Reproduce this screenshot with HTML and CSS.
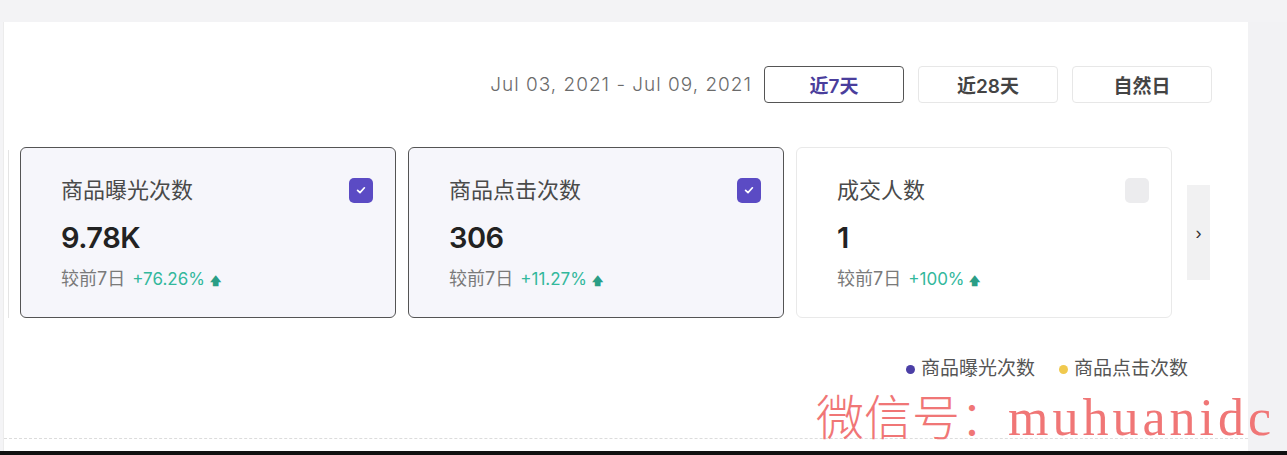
FILE: index.html
```html
<!DOCTYPE html>
<html lang="zh-CN">
<head>
    <meta charset="UTF-8">
    <meta name="viewport" content="width=device-width, initial-scale=1.0">
    <title>数据概览</title>
    <link rel="stylesheet" href="styles.css">
</head>
<body>
    <div class="top-strip"></div>
    <div class="main">
        <div class="panel">
            <div class="toolbar">
                <span class="date-range">Jul 03, 2021 - Jul 09, 2021</span>
                <button class="range-btn active">近7天</button>
                <button class="range-btn">近28天</button>
                <button class="range-btn">自然日</button>
            </div>

            <div class="cards-row">
                <div class="card-edge"></div>
                <div class="card selected">
                    <div class="card-head">
                        <span class="card-title">商品曝光次数</span>
                        <span class="check on">
                            <svg viewBox="0 0 12 12" width="12" height="12"><path d="M2.6 6.3 L5 8.6 L9.4 3.8" fill="none" stroke="#fff" stroke-width="1.7" stroke-linecap="round" stroke-linejoin="round"/></svg>
                        </span>
                    </div>
                    <div class="card-value">9.78K</div>
                    <div class="card-compare">较前7日 <span class="up">+76.26% <i class="arrow">&#129093;</i></span></div>
                </div>
                <div class="card selected">
                    <div class="card-head">
                        <span class="card-title">商品点击次数</span>
                        <span class="check on">
                            <svg viewBox="0 0 12 12" width="12" height="12"><path d="M2.6 6.3 L5 8.6 L9.4 3.8" fill="none" stroke="#fff" stroke-width="1.7" stroke-linecap="round" stroke-linejoin="round"/></svg>
                        </span>
                    </div>
                    <div class="card-value">306</div>
                    <div class="card-compare">较前7日 <span class="up">+11.27% <i class="arrow">&#129093;</i></span></div>
                </div>
                <div class="card">
                    <div class="card-head">
                        <span class="card-title">成交人数</span>
                        <span class="check"></span>
                    </div>
                    <div class="card-value">1</div>
                    <div class="card-compare">较前7日 <span class="up">+100% <i class="arrow">&#129093;</i></span></div>
                </div>
                <button class="next-btn">&#8250;</button>
            </div>

            <div class="legend">
                <span class="legend-item"><i class="dot purple"></i>商品曝光次数</span>
                <span class="legend-item"><i class="dot yellow"></i>商品点击次数</span>
            </div>

            <div class="dashed"></div>
            <div class="watermark">微信号：<span class="wm-latin">muhuanidc</span></div>
        </div>
        <div class="side"></div>
    </div>
    <div class="bottom-bar"></div>
</body>
</html>
```

FILE: styles.css
```css
/* Page frame */
html, body {
    margin: 0;
    width: 1287px;
    height: 455px;
    overflow: hidden;
    background-color: #f4f4f6;
    font-family: "Inter", "Noto Sans CJK SC", sans-serif;
}
.top-strip {
    height: 22px;
    background-color: #f3f3f5;
}
.main {
    display: flex;
    height: 429px;
}
.panel {
    position: relative;
    width: 1245px;
    margin-left: 3px;
    background-color: #ffffff;
    border-left: 1px solid #ececec;
    box-sizing: border-box;
}
.side {
    flex: 1;
    background-color: #f2f2f4;
}
.bottom-bar {
    height: 4px;
    background-color: #111111;
}

/* Date range toolbar */
.toolbar {
    display: flex;
    justify-content: flex-end;
    align-items: center;
    padding: 44px 36px 0 0;
    height: 37px;
}
.date-range {
    color: #6b6b6b;
    font-size: 19px;
    font-weight: 300;
    letter-spacing: 1px;
    margin-right: 12px;
}
.range-btn {
    width: 140px;
    height: 37px;
    margin-left: 14px;
    border: 1px solid #e7e7e7;
    border-radius: 4px;
    background-color: #ffffff;
    color: #444444;
    font-family: inherit;
    font-size: 19px;
    font-weight: 600;
}
.range-btn.active {
    border: 1.5px solid #555555;
    color: #4a3e9c;
    margin-left: 0;
}

/* Metric cards */
.cards-row {
    display: flex;
    align-items: flex-start;
    margin-top: 44px;
    padding-left: 4px;
}
.card-edge {
    width: 1px;
    height: 168px;
    margin-top: 3px;
    margin-right: 11px;
    background-color: #e4e4e4;
}
.card {
    width: 376px;
    height: 171px;
    margin-right: 12px;
    padding: 27px 22px 0 40px;
    box-sizing: border-box;
    border: 1px solid #e9e9e9;
    border-radius: 6px;
    background-color: #ffffff;
}
.card.selected {
    border: 1.5px solid #545454;
    background-color: #f6f6fb;
}
.card-head {
    display: flex;
    justify-content: space-between;
    align-items: center;
    height: 30px;
}
.card-title {
    color: #4a4a4a;
    font-size: 22px;
    line-height: 30px;
}
.check {
    display: flex;
    align-items: center;
    justify-content: center;
    width: 24px;
    height: 25px;
    border-radius: 5px;
    background-color: #ececee;
}
.check.on {
    background-color: #5b4bc4;
}
.card-value {
    margin-top: 15px;
    color: #222222;
    font-size: 29px;
    font-weight: 600;
    letter-spacing: -0.5px;
}
.card-compare {
    margin-top: 9px;
    color: #7a7a7a;
    font-size: 18px;
}
.up {
    color: #33b89c;
    font-size: 17px;
    margin-left: 2px;
}
.arrow {
    font-style: normal;
    font-weight: 700;
    font-size: 11px;
    color: #2a9e86;
}
.next-btn {
    width: 23px;
    height: 95px;
    margin: 38px 0 0 3px;
    padding: 0;
    border: none;
    background-color: #f1f1f2;
    color: #333333;
    font-size: 18px;
    line-height: 1;
}

/* Chart legend */
.legend {
    display: flex;
    justify-content: flex-end;
    gap: 24px;
    padding-right: 60px;
    margin-top: 40px;
}
.legend-item {
    display: flex;
    align-items: center;
    color: #555555;
    font-size: 19px;
    line-height: 22px;
}
.dot {
    display: inline-block;
    width: 9px;
    height: 9px;
    border-radius: 50%;
    margin-right: 6px;
}
.dot.purple {
    background-color: #4b3fa6;
}
.dot.yellow {
    background-color: #f0c94e;
}
.dashed {
    position: absolute;
    left: 0;
    right: 0;
    top: 416px;
    border-top: 1px dashed #dcdcdc;
}

/* Overlay watermark */
.watermark {
    position: absolute;
    left: 812px;
    top: 366px;
    line-height: 52px;
    color: #f07676;
    font-family: "Noto Sans CJK SC", sans-serif;
    font-size: 48px;
    font-weight: 300;
    white-space: nowrap;
}
.wm-latin {
    font-family: "Liberation Serif", serif;
    font-size: 52px;
    letter-spacing: 4px;
}
```
